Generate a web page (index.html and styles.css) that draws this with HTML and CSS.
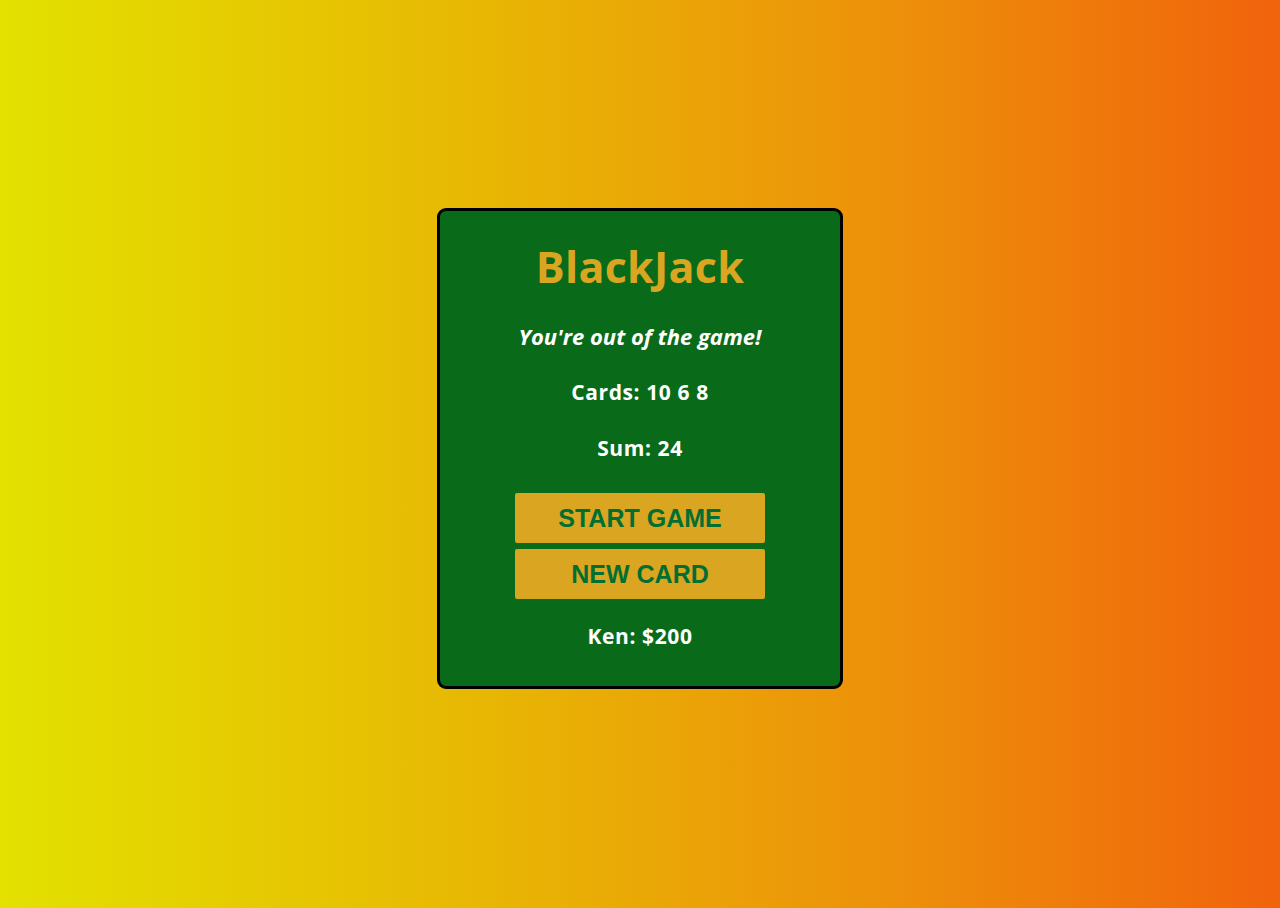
FILE: index.html
```html
<!DOCTYPE html>
<html lang="en">
<head>
<meta charset="utf-8">
<title>BlackJack</title>
<link rel="stylesheet" href="styles.css">
</head>
<body>
<main class="table">
  <h1 class="title">BlackJack</h1>
  <p class="message">You're out of the game!</p>
  <p class="line">Cards: 10 6 8</p>
  <p class="line">Sum: 24</p>
  <div class="actions">
    <button class="btn">START GAME</button>
    <button class="btn">NEW CARD</button>
  </div>
  <p class="line player">Ken: $200</p>
</main>
</body>
</html>
```
FILE: styles.css
```css
html, body {
  margin: 0;
  padding: 0;
  height: 100%;
}
body {
  background: linear-gradient(to right, #e3e100 0%, #e8b404 40%, #ed900a 70%, #f1630c 100%);
  font-family: "Trebuchet MS", "Open Sans", sans-serif;
  display: flex;
  justify-content: center;
  align-items: flex-start;
}
.table {
  margin-top: 208px;
  width: 400px;
  border: 3px solid #000;
  border-radius: 9px;
  background: #096b19;
  padding: 26px 0 22px;
  display: flex;
  flex-direction: column;
  align-items: center;
  text-align: center;
}
.title {
  margin: 0 0 11px;
  font-size: 43px;
  line-height: 60px;
  font-weight: 700;
  letter-spacing: 0.3px;
  color: #daa520;
}
.message, .line {
  margin: 0;
  color: #fff;
  font-size: 21px;
  line-height: 56px;
  font-weight: 700;
}
.line {
  letter-spacing: 0.6px;
}
.message {
  font-style: italic;
  font-size: 22px;
}
.actions {
  margin-top: 17px;
  display: flex;
  flex-direction: column;
  gap: 6px;
}
.btn {
  width: 250px;
  height: 50px;
  border: none;
  border-radius: 2px;
  background: #daa520;
  color: #016f32;
  font-family: "Liberation Sans", Arial, sans-serif;
  font-weight: 700;
  font-size: 25px;
  padding: 0;
}
.player {
  margin-top: 9px;
}
```
